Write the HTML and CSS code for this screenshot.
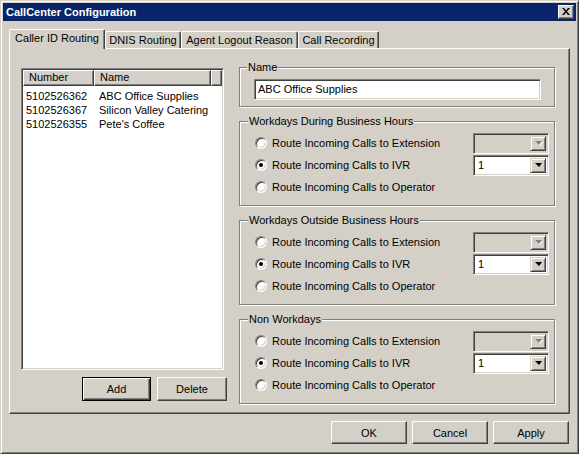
FILE: index.html
```html
<!DOCTYPE html>
<html lang="en">
<head>
    <meta charset="UTF-8">
    <meta name="viewport" content="width=device-width, initial-scale=1.0">
    <title>CallCenter Configuration</title>
    <link rel="stylesheet" href="styles.css">
</head>
<body>
<div class="window">
    <div class="titlebar">
        <span class="title">CallCenter Configuration</span>
        <div class="closebtn">
            <svg width="8" height="7" viewBox="0 0 8 7"><path d="M0 0h2l2 2.5L6 0h2L5 3.5 8 7H6L4 4.5 2 7H0l3-3.5z" fill="#000"/></svg>
        </div>
    </div>
    <div class="client">
        <div class="tabs">
            <div class="tab active tab-caller">Caller ID Routing</div>
            <div class="tab tab-dnis">DNIS Routing</div>
            <div class="tab tab-agent">Agent Logout Reason</div>
            <div class="tab tab-rec">Call Recording</div>
        </div>
        <div class="panel">
            <div class="leftcol">
                <div class="listbox">
                    <div class="listhead">
                        <div class="hcell hnum">Number</div>
                        <div class="hcell hname">Name</div>
                        <div class="hcell hrest"></div>
                    </div>
                    <div class="rows">
                        <div class="row"><span class="num">5102526362</span><span>ABC Office Supplies</span></div>
                        <div class="row"><span class="num">5102526367</span><span>Silicon Valley Catering</span></div>
                        <div class="row"><span class="num">5102526355</span><span>Pete's Coffee</span></div>
                    </div>
                </div>
                <div class="listbtns">
                    <div class="btn default addbtn">Add</div>
                    <div class="btn delbtn">Delete</div>
                </div>
            </div>
            <div class="rightcol">
                <div class="group namegroup">
                    <div class="group-title">Name</div>
                    <div class="textbox">ABC Office Supplies</div>
                </div>

                <div class="group">
                    <div class="group-title">Workdays During Business Hours</div>
                    <div class="options">
                        <div class="option">
                            <span class="radio"></span>
                            <span class="optlabel">Route Incoming Calls to Extension</span>
                            <div class="combo disabled"><span class="combotext"></span><span class="arrowbtn"><span class="arrow"></span></span></div>
                        </div>
                        <div class="option">
                            <span class="radio on"></span>
                            <span class="optlabel">Route Incoming Calls to IVR</span>
                            <div class="combo"><span class="combotext">1</span><span class="arrowbtn"><span class="arrow"></span></span></div>
                        </div>
                        <div class="option">
                            <span class="radio"></span>
                            <span class="optlabel">Route Incoming Calls to Operator</span>
                        </div>
                    </div>
                </div>

                <div class="group">
                    <div class="group-title">Workdays Outside Business Hours</div>
                    <div class="options">
                        <div class="option">
                            <span class="radio"></span>
                            <span class="optlabel">Route Incoming Calls to Extension</span>
                            <div class="combo disabled"><span class="combotext"></span><span class="arrowbtn"><span class="arrow"></span></span></div>
                        </div>
                        <div class="option">
                            <span class="radio on"></span>
                            <span class="optlabel">Route Incoming Calls to IVR</span>
                            <div class="combo"><span class="combotext">1</span><span class="arrowbtn"><span class="arrow"></span></span></div>
                        </div>
                        <div class="option">
                            <span class="radio"></span>
                            <span class="optlabel">Route Incoming Calls to Operator</span>
                        </div>
                    </div>
                </div>

                <div class="group">
                    <div class="group-title">Non Workdays</div>
                    <div class="options">
                        <div class="option">
                            <span class="radio"></span>
                            <span class="optlabel">Route Incoming Calls to Extension</span>
                            <div class="combo disabled"><span class="combotext"></span><span class="arrowbtn"><span class="arrow"></span></span></div>
                        </div>
                        <div class="option">
                            <span class="radio on"></span>
                            <span class="optlabel">Route Incoming Calls to IVR</span>
                            <div class="combo"><span class="combotext">1</span><span class="arrowbtn"><span class="arrow"></span></span></div>
                        </div>
                        <div class="option">
                            <span class="radio"></span>
                            <span class="optlabel">Route Incoming Calls to Operator</span>
                        </div>
                    </div>
                </div>
            </div>
        </div>
        <div class="footer">
            <div class="btn footbtn">OK</div>
            <div class="btn footbtn">Cancel</div>
            <div class="btn footbtn">Apply</div>
        </div>
    </div>
</div>
</body>
</html>
```

FILE: styles.css
```css
*{
    box-sizing: border-box;
}
body{
    margin: 0;
    background-color: #d4d0c8;
    font-family: "Liberation Sans", Arial, sans-serif;
    font-size: 11px;
    color: #000;
}
.window{
    width: 579px;
    height: 454px;
    background-color: #d4d0c8;
    border: 1px solid;
    border-color: #d4d0c8 #404040 #404040 #d4d0c8;
    box-shadow: inset 1px 1px #fff, inset -1px -1px #808080;
    padding: 2px;
}
.titlebar{
    height: 18px;
    background-color: #0a246a;
    display: flex;
    align-items: center;
    justify-content: space-between;
    padding: 0 2px 0 3px;
}
.title{
    color: #fff;
    font-weight: bold;
    font-size: 11px;
}
.closebtn{
    width: 16px;
    height: 14px;
    background-color: #d4d0c8;
    border: 1px solid;
    border-color: #fff #404040 #404040 #fff;
    box-shadow: inset -1px -1px #808080;
    display: flex;
    align-items: center;
    justify-content: center;
    padding-bottom: 1px;
}
.client{
    padding: 0 6px;
}
.tabs{
    display: flex;
    align-items: flex-end;
    height: 19px;
    margin-top: 8px;
}
.tab{
    height: 17px;
    padding-top: 2px;
    line-height: 13px;
    text-align: center;
    border: 1px solid;
    border-bottom: 0;
    border-color: #fff #404040 transparent #fff;
    border-radius: 2px 2px 0 0;
    box-shadow: inset -1px 0 #808080;
    white-space: nowrap;
}
.tab.active{
    height: 20px;
    margin-bottom: -1px;
    background-color: #d4d0c8;
    position: relative;
    z-index: 1;
}
.tab-caller{
    width: 96px;
}
.tab-dnis{
    width: 76px;
}
.tab-agent{
    width: 117px;
}
.tab-rec{
    width: 81px;
}
.panel{
    height: 366px;
    border: 1px solid;
    border-color: #fff #404040 #404040 #fff;
    box-shadow: inset -1px -1px #808080;
    padding: 18px 0 0 11px;
    display: flex;
    gap: 15px;
}
.leftcol{
    width: 203px;
}
.listbox{
    width: 203px;
    height: 302px;
    margin-top: 1px;
    background-color: #fff;
    border: 1px solid;
    border-color: #808080 #fff #fff #808080;
    box-shadow: inset 1px 1px #404040, inset -1px -1px #d4d0c8;
    padding: 1px;
}
.listhead{
    display: flex;
    height: 16px;
}
.hcell{
    height: 16px;
    background-color: #d4d0c8;
    border: 1px solid;
    border-color: #fff #404040 #404040 #fff;
    box-shadow: inset -1px -1px #808080;
    padding-left: 5px;
    line-height: 13px;
}
.hnum{
    width: 71px;
}
.hname{
    width: 117px;
}
.hrest{
    flex: 1;
}
.rows{
    padding: 3px 0 0 3px;
}
.row{
    display: flex;
    height: 14px;
    line-height: 14px;
}
.num{
    width: 73px;
}
.listbtns{
    display: flex;
    gap: 6px;
    margin: 7px 0 0 61px;
}
.btn{
    height: 24px;
    background-color: #d4d0c8;
    border: 1px solid;
    border-color: #fff #404040 #404040 #fff;
    box-shadow: inset -1px -1px #808080;
    display: flex;
    align-items: center;
    justify-content: center;
    flex-shrink: 0;
}
.btn.default{
    border-color: #000;
    box-shadow: inset 1px 1px #fff, inset -1px -1px #404040, inset -2px -2px #808080;
}
.addbtn{
    width: 69px;
}
.delbtn{
    width: 70px;
}
.rightcol{
    width: 316px;
    display: flex;
    flex-direction: column;
    gap: 14px;
}
.group{
    border: 1px solid #808080;
    box-shadow: inset 1px 1px #fff, 1px 1px #fff;
    padding: 0 5px 7px 15px;
}
.namegroup{
    padding: 0 0 6px 14px;
}
.group-title{
    width: fit-content;
    margin: -7px 0 0 -7px;
    padding: 0 1px;
    line-height: 13px;
    background-color: #d4d0c8;
}
.textbox{
    width: 287px;
    height: 21px;
    margin-top: 5px;
    background-color: #fff;
    border: 1px solid;
    border-color: #808080 #fff #fff #808080;
    box-shadow: inset 1px 1px #404040, inset -1px -1px #d4d0c8;
    padding-left: 3px;
    line-height: 18px;
}
.options{
    margin-top: 4px;
}
.option{
    display: flex;
    align-items: center;
    height: 22px;
}
.radio{
    width: 12px;
    height: 12px;
    border-radius: 50%;
    background-color: #fff;
    border: 1px solid;
    border-color: #808080 #fff #fff #808080;
    box-shadow: inset 1px 1px #404040, inset -1px -1px #d4d0c8;
    display: grid;
    place-items: center;
}
.radio.on::after{
    content: "";
    width: 4px;
    height: 4px;
    border-radius: 50%;
    background-color: #000;
}
.optlabel{
    flex: 1;
    margin-left: 5px;
}
.combo{
    width: 76px;
    height: 21px;
    background-color: #fff;
    border: 1px solid;
    border-color: #808080 #fff #fff #808080;
    box-shadow: inset 1px 1px #404040, inset -1px -1px #d4d0c8;
    padding: 2px;
    display: flex;
}
.combo.disabled{
    background-color: #d4d0c8;
}
.combotext{
    flex: 1;
    padding-left: 2px;
    line-height: 15px;
}
.arrowbtn{
    width: 16px;
    background-color: #d4d0c8;
    border: 1px solid;
    border-color: #d4d0c8 #404040 #404040 #d4d0c8;
    box-shadow: inset 1px 1px #fff, inset -1px -1px #808080;
    display: flex;
    align-items: center;
    justify-content: center;
}
.arrow{
    width: 0;
    height: 0;
    border-left: 4px solid transparent;
    border-right: 3px solid transparent;
    border-top: 4px solid #000;
}
.disabled .arrow{
    border-top-color: #808080;
    filter: drop-shadow(1px 1px 0 #fff);
}
.footer{
    display: flex;
    justify-content: flex-end;
    gap: 5px;
    margin-top: 7px;
    padding-right: 1px;
}
.footbtn{
    width: 76px;
    height: 23px;
}
```
